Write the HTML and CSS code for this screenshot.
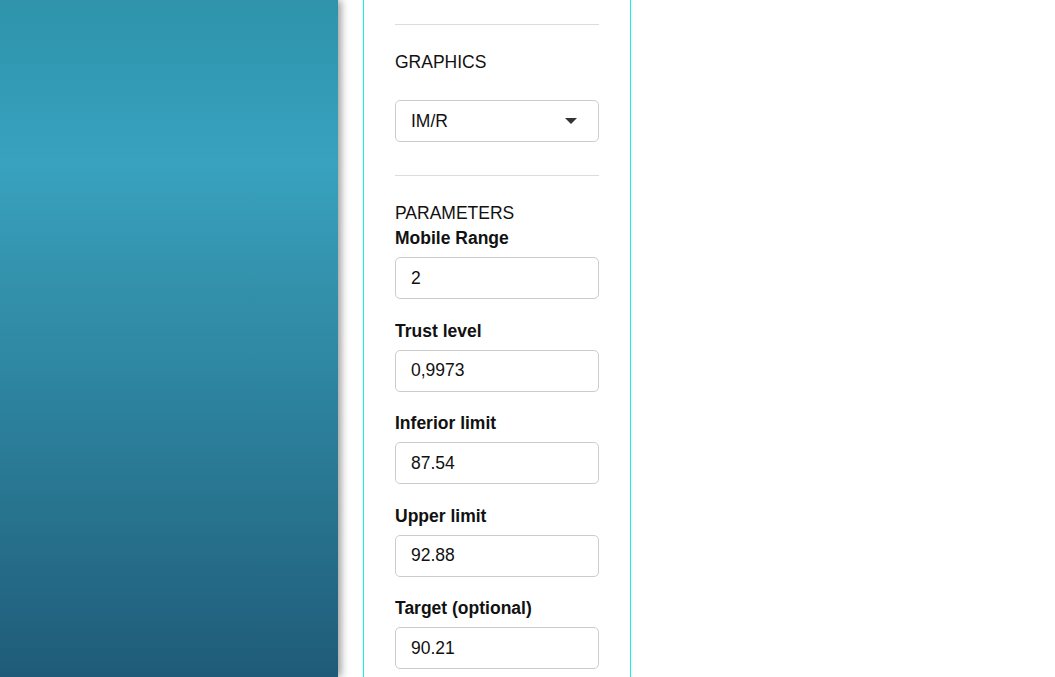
FILE: index.html
```html
<!DOCTYPE html>
<html lang="en">
<head>
    <meta charset="UTF-8">
    <meta name="viewport" content="width=device-width, initial-scale=1.0">
    <title>Control Chart</title>
    <link rel="stylesheet" href="styles.css">
</head>
<body>
    <div class="layout">
        <div class="side-banner"></div>

        <div class="settings">
            <hr class="divider">

            <div class="section-title">GRAPHICS</div>
            <div class="select-box">
                <span>IM/R</span>
                <span class="caret"></span>
            </div>

            <hr class="divider">

            <div class="section-title params">PARAMETERS</div>

            <div class="field">
                <label for="range">Mobile Range</label>
                <input class="field-input" id="range" type="text" value="2">
            </div>
            <div class="field">
                <label for="trust">Trust level</label>
                <input class="field-input" id="trust" type="text" value="0,9973">
            </div>
            <div class="field">
                <label for="lower">Inferior limit</label>
                <input class="field-input" id="lower" type="text" value="87.54">
            </div>
            <div class="field">
                <label for="upper">Upper limit</label>
                <input class="field-input" id="upper" type="text" value="92.88">
            </div>
            <div class="field">
                <label for="target">Target (optional)</label>
                <input class="field-input" id="target" type="text" value="90.21">
            </div>
        </div>

        <div class="chart-area"></div>
    </div>
</body>
</html>
```

FILE: styles.css
```css
* {
    margin: 0;
    padding: 0;
    box-sizing: border-box;
}

html, body {
    height: 100%;
    overflow: hidden;
}

body {
    font-family: "Liberation Sans", Arial, sans-serif;
    font-size: 17.5px;
    color: #111;
    background: white;
}

.layout {
    display: flex;
    height: 100%;
}

.side-banner {
    width: 338px;
    flex-shrink: 0;
    background: linear-gradient(to bottom, #2e93ab 0%, #38a2bf 24%, #3493ae 40%, #2e86a2 55%, #28748f 75%, #1f5b79 100%);
    box-shadow: 3px 0 8px rgba(0,0,0,0.4);
}

.settings {
    width: 268px;
    flex-shrink: 0;
    margin-left: 25px;
    padding: 24px 31px 0 31px;
    border-left: 1px solid #12f5e0;
    border-right: 1px solid #12f5e0;
}

.divider {
    border: none;
    border-top: 1px solid #dcdcdc;
    height: 0;
}

.section-title {
    line-height: 24px;
    margin: 25px 0 26px;
}

.section-title.params {
    margin-bottom: 3px;
}

.select-box {
    display: flex;
    align-items: center;
    justify-content: space-between;
    height: 42px;
    padding: 0 21px 0 15px;
    border: 1px solid #ccc;
    border-radius: 5px;
    margin-bottom: 33px;
}

.caret {
    width: 0;
    height: 0;
    border-left: 6px solid transparent;
    border-right: 6px solid transparent;
    border-top: 6px solid #333;
}

.field label {
    display: block;
    font-weight: bold;
    line-height: 20px;
    margin-bottom: 9px;
}

.field-input {
    display: block;
    width: 100%;
    height: 42px;
    padding: 0 15px;
    border: 1px solid #ccc;
    border-radius: 5px;
    font-family: inherit;
    font-size: 17.5px;
    color: #111;
    margin-bottom: 21.5px;
}

.chart-area {
    flex: 1;
}
```
